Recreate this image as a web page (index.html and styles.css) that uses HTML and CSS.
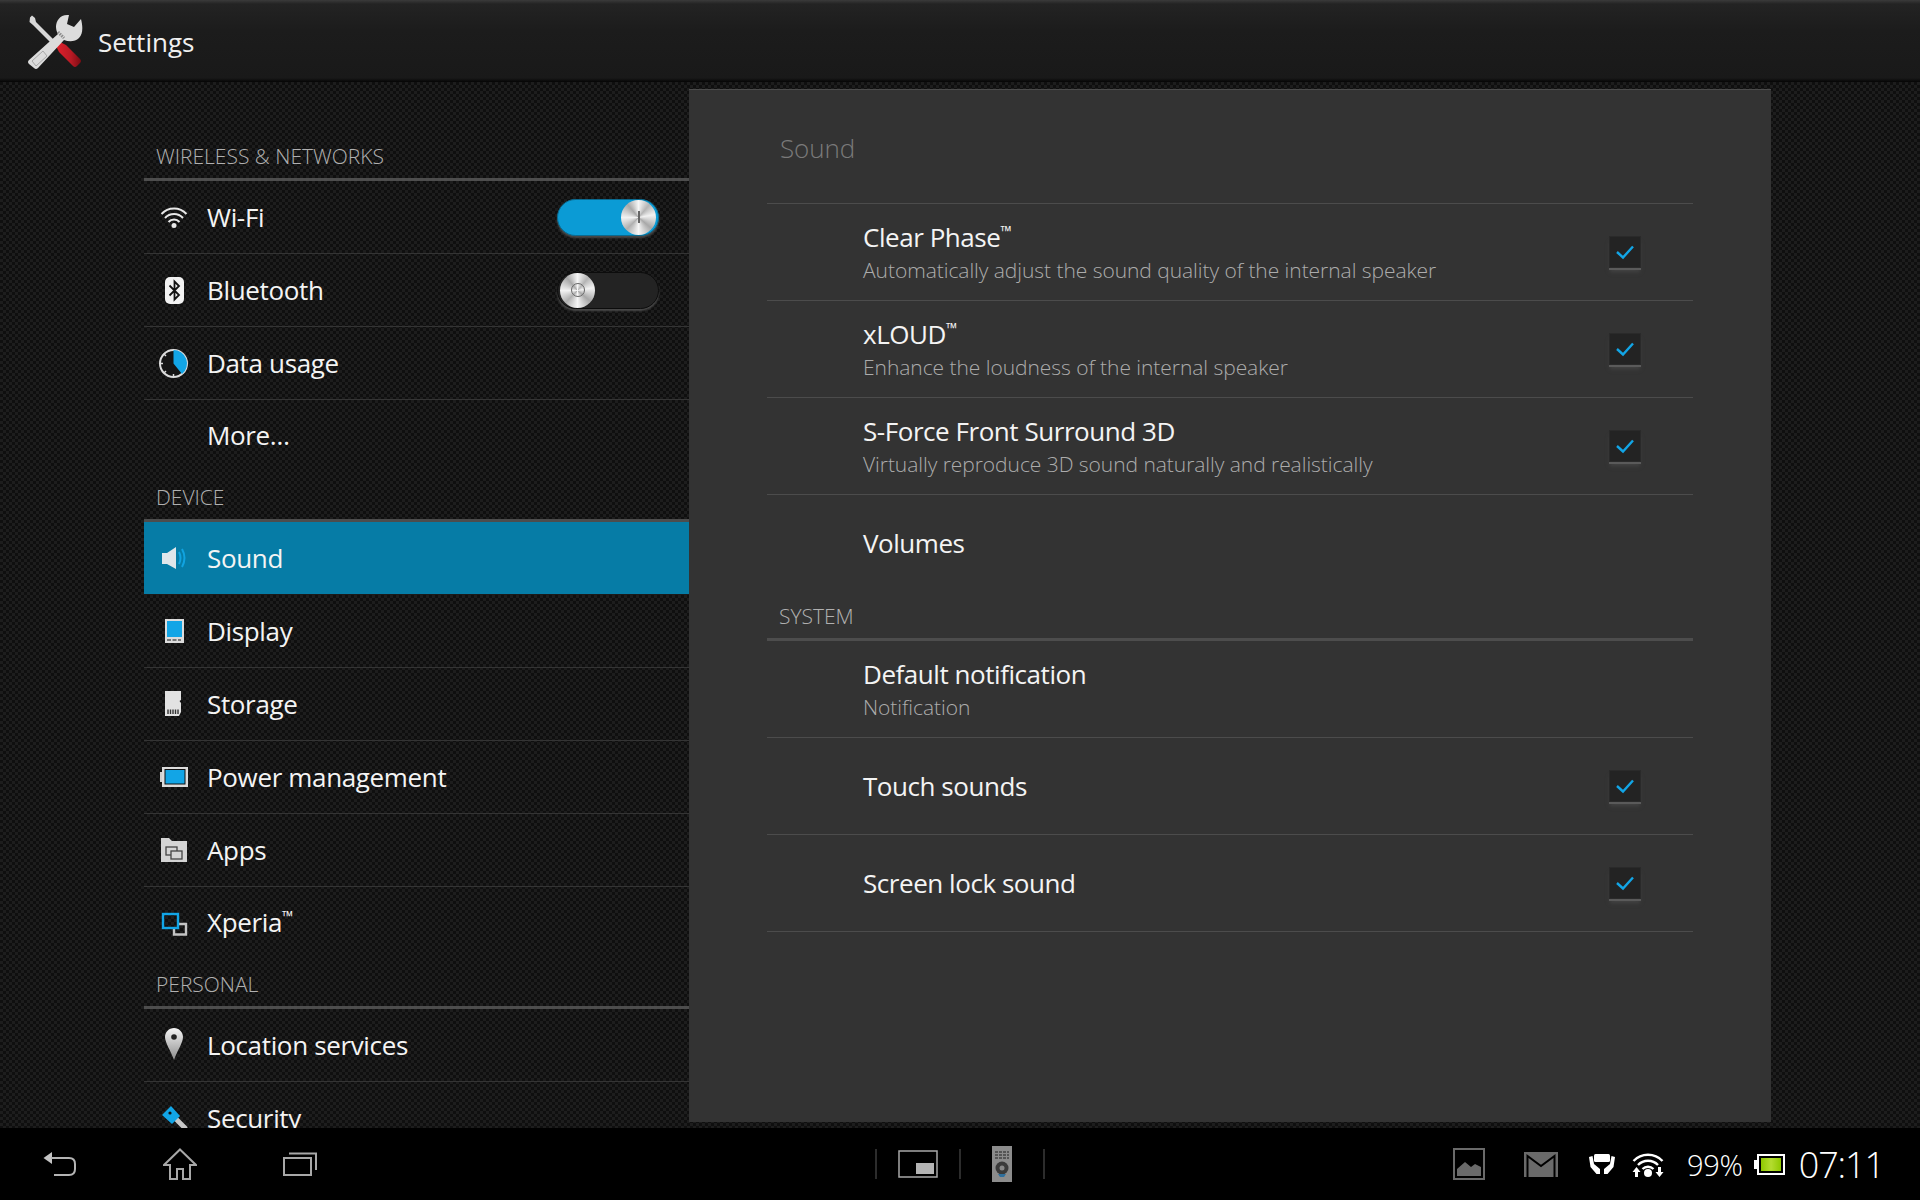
FILE: index.html
```html
<!DOCTYPE html>
<html lang="en">
<head>
    <meta charset="UTF-8">
    <meta name="viewport" content="width=device-width, initial-scale=1.0">
    <title>Settings</title>
    <link rel="stylesheet" href="styles.css">
</head>
<body>
<div class="app">

    <header class="action-bar">
        <svg class="app-icon" width="56" height="56" viewBox="0 0 56 56">
            <defs>
                <linearGradient id="redGrad" x1="0" y1="0" x2="1" y2="0">
                    <stop offset="0" stop-color="#e0202c"/>
                    <stop offset="0.6" stop-color="#b81a24"/>
                    <stop offset="1" stop-color="#7a0c14"/>
                </linearGradient>
            </defs>
            <path d="M3 4.5 L5 2.5 L8 5 L9 9 L28 28 L25 31 L6 12 L2.5 9 Z" fill="#d8d8d8"/>
            <path d="M29 33 L33 29 L39 32 L53 46 Q55 48 53 50 L50 53 Q48 55 46 53 L32 39 Z" fill="url(#redGrad)"/>
            <path d="M42 2 C33 1 29 8 29 14 C29 17 30 19 31 21 L2 47 Q0 49 2 51 L7 55 Q9 57 11 55 L37 27 C42 29 48 29 52 25 C56 21 56 14 54 6 L47 14 L40 11 Z" fill="#dcdcdc"/>
            <path d="M5 48 L16 38 L20 43 L9 53 Z" fill="none" stroke="#a8a8a8" stroke-width="1"/>
            <path d="M31 19 L37 25" stroke="#8a8a8a" stroke-width="3" stroke-dasharray="1.5 1"/>
        </svg>
        <span class="app-title">Settings</span>
    </header>

    <div class="content">
        <nav class="nav">
            <div class="section-head">WIRELESS &amp; NETWORKS</div>

            <div class="item">
                <span class="item-icon">
                    <svg width="40" height="40" viewBox="0 0 40 40" fill="none" stroke="#e8e8e8" stroke-width="2">
                        <path d="M7.5 17 A17 17 0 0 1 32.5 17"/>
                        <path d="M11 21 A12 12 0 0 1 29 21"/>
                        <path d="M14.5 25 A7.5 7.5 0 0 1 25.5 25"/>
                        <circle cx="20" cy="28.5" r="2.5" fill="#e8e8e8" stroke="none"/>
                    </svg>
                </span>
                <span class="item-label">Wi-Fi</span>
                <span class="switch switch-on"><span class="knob"><span class="knob-bar"></span></span></span>
            </div>

            <div class="item">
                <span class="item-icon">
                    <svg width="40" height="40" viewBox="0 0 40 40">
                        <rect x="11" y="7" width="19" height="27" rx="5" fill="#f2f2f2"/>
                        <path d="M15.5 15.5 L25 25 L20.5 29.5 V11.5 L25 16 L15.5 25.5" fill="none" stroke="#111" stroke-width="1.8"/>
                    </svg>
                </span>
                <span class="item-label">Bluetooth</span>
                <span class="switch"><span class="knob"><span class="knob-ring"></span></span></span>
            </div>

            <div class="item">
                <span class="item-icon">
                    <svg width="40" height="40" viewBox="0 0 40 40">
                        <circle cx="19.5" cy="20.5" r="13.5" fill="#141414" stroke="#dcdcdc" stroke-width="2"/>
                        <path d="M19.5 20.5 L19.5 7 A13.5 13.5 0 0 1 28 31 Z" fill="#12a5e6"/>
                        <path d="M19.5 34 V31 M6 20.5 H9 M10 11 L12 13 M10 30 L12 28" stroke="#dcdcdc" stroke-width="1.5"/>
                    </svg>
                </span>
                <span class="item-label">Data usage</span>
            </div>

            <div class="item item-plain">
                <span class="item-icon"></span>
                <span class="item-label">More&#8230;</span>
            </div>

            <div class="section-head">DEVICE</div>

            <div class="item item-selected">
                <span class="item-icon">
                    <svg width="40" height="40" viewBox="0 0 40 40">
                        <path d="M8 15 H13 L22 9 V31 L13 26 H8 Z" fill="#dfe6ea"/>
                        <path d="M25 14 Q28 20 25 26 M28 11 Q33 20 28 29" fill="none" stroke="#11a3e0" stroke-width="2"/>
                    </svg>
                </span>
                <span class="item-label">Sound</span>
            </div>

            <div class="item">
                <span class="item-icon">
                    <svg width="40" height="40" viewBox="0 0 40 40">
                        <rect x="11" y="8" width="19" height="24" fill="#dcdcdc"/>
                        <rect x="13" y="10" width="15" height="16" fill="#12a5e6"/>
                        <path d="M13 29 H27" stroke="#555" stroke-width="1.5" stroke-dasharray="4 1.5"/>
                    </svg>
                </span>
                <span class="item-label">Display</span>
            </div>

            <div class="item">
                <span class="item-icon">
                    <svg width="40" height="40" viewBox="0 0 40 40">
                        <path d="M11 7 H27 V16 L25.5 17 L27 19 V28 L25 32 H11 Z" fill="#e2e2e2"/>
                        <path d="M14 25.5 V30 M16.5 25.5 V30 M19 25.5 V30 M21.5 25.5 V30 M24 25.5 V30" stroke="#333" stroke-width="1.4"/>
                    </svg>
                </span>
                <span class="item-label">Storage</span>
            </div>

            <div class="item">
                <span class="item-icon">
                    <svg width="40" height="40" viewBox="0 0 40 40">
                        <rect x="6" y="15" width="3" height="10" fill="#cfcfcf"/>
                        <rect x="8" y="10" width="26" height="20" fill="#dcdcdc"/>
                        <rect x="11" y="12.5" width="20" height="14.5" fill="#12a5e6" stroke="#111" stroke-width="1"/>
                    </svg>
                </span>
                <span class="item-label">Power management</span>
            </div>

            <div class="item">
                <span class="item-icon">
                    <svg width="40" height="40" viewBox="0 0 40 40">
                        <path d="M7 8 H15 L18 11 H33 V32 H7 Z" fill="#d4d4d4"/>
                        <rect x="12" y="17" width="11" height="8" fill="none" stroke="#444" stroke-width="1.3"/>
                        <rect x="17" y="21" width="11" height="8" fill="#d4d4d4" stroke="#444" stroke-width="1.3"/>
                    </svg>
                </span>
                <span class="item-label">Apps</span>
            </div>

            <div class="item item-plain">
                <span class="item-icon">
                    <svg width="40" height="40" viewBox="0 0 40 40" fill="none" stroke-width="2.4">
                        <path d="M23 20 H32 V30.5 H20 V25" stroke="#c4c4c4"/>
                        <rect x="9" y="10" width="15" height="14" stroke="#12a5e6"/>
                    </svg>
                </span>
                <span class="item-label">Xperia<span class="tm">&#8482;</span></span>
            </div>

            <div class="section-head">PERSONAL</div>

            <div class="item">
                <span class="item-icon">
                    <svg width="40" height="40" viewBox="0 0 40 40">
                        <defs>
                            <linearGradient id="pinGrad" x1="0" y1="0" x2="0" y2="1">
                                <stop offset="0" stop-color="#f4f4f4"/>
                                <stop offset="1" stop-color="#8c8c8c"/>
                            </linearGradient>
                        </defs>
                        <path d="M20 3 C25 3 29 7 29 12 C29 18 23 26 20 35 C17 26 11 18 11 12 C11 7 15 3 20 3 Z" fill="url(#pinGrad)"/>
                        <circle cx="20" cy="12" r="2.8" fill="#222"/>
                    </svg>
                </span>
                <span class="item-label">Location services</span>
            </div>

            <div class="item">
                <span class="item-icon">
                    <svg width="40" height="40" viewBox="0 0 40 40">
                        <path d="M21 20 L32 31" stroke="#c8c8c8" stroke-width="5"/>
                        <path d="M17 8 L26 18 L18 26 L8 17 Z" fill="#12a5e6"/>
                        <circle cx="16" cy="15" r="1.6" fill="#111"/>
                    </svg>
                </span>
                <span class="item-label">Security</span>
            </div>
        </nav>

        <main class="panel">
            <div class="panel-title">Sound</div>

            <div class="row">
                <div class="row-text">
                    <div class="row-title">Clear Phase<span class="tm">&#8482;</span></div>
                    <div class="row-sub">Automatically adjust the sound quality of the internal speaker</div>
                </div>
                <span class="check"><svg width="20" height="16" viewBox="0 0 20 16"><path d="M2 8 L8 13.5 L18 2.5" fill="none" stroke="#12a5e6" stroke-width="2.4"/></svg></span>
            </div>

            <div class="row">
                <div class="row-text">
                    <div class="row-title">xLOUD<span class="tm">&#8482;</span></div>
                    <div class="row-sub">Enhance the loudness of the internal speaker</div>
                </div>
                <span class="check"><svg width="20" height="16" viewBox="0 0 20 16"><path d="M2 8 L8 13.5 L18 2.5" fill="none" stroke="#12a5e6" stroke-width="2.4"/></svg></span>
            </div>

            <div class="row">
                <div class="row-text">
                    <div class="row-title">S-Force Front Surround 3D</div>
                    <div class="row-sub">Virtually reproduce 3D sound naturally and realistically</div>
                </div>
                <span class="check"><svg width="20" height="16" viewBox="0 0 20 16"><path d="M2 8 L8 13.5 L18 2.5" fill="none" stroke="#12a5e6" stroke-width="2.4"/></svg></span>
            </div>

            <div class="row row-plain">
                <div class="row-text">
                    <div class="row-title">Volumes</div>
                </div>
            </div>

            <div class="section-head">SYSTEM</div>

            <div class="row">
                <div class="row-text">
                    <div class="row-title">Default notification</div>
                    <div class="row-sub">Notification</div>
                </div>
            </div>

            <div class="row">
                <div class="row-text">
                    <div class="row-title">Touch sounds</div>
                </div>
                <span class="check"><svg width="20" height="16" viewBox="0 0 20 16"><path d="M2 8 L8 13.5 L18 2.5" fill="none" stroke="#12a5e6" stroke-width="2.4"/></svg></span>
            </div>

            <div class="row">
                <div class="row-text">
                    <div class="row-title">Screen lock sound</div>
                </div>
                <span class="check"><svg width="20" height="16" viewBox="0 0 20 16"><path d="M2 8 L8 13.5 L18 2.5" fill="none" stroke="#12a5e6" stroke-width="2.4"/></svg></span>
            </div>
        </main>
    </div>

    <footer class="system-bar">
        <div class="soft-keys">
            <svg width="34" height="26" viewBox="0 0 34 26" fill="none">
                <path d="M0.5 7 L9 1 V13 Z" fill="#c4c4c4"/>
                <path d="M8 7 H26 Q32 7 32 13 V18 Q32 24 26 24 H11" stroke="#b4b4b4" stroke-width="2"/>
            </svg>
            <svg width="34" height="32" viewBox="0 0 34 32" fill="none" stroke="#a8a8a8" stroke-width="2">
                <path d="M17 1.5 L33 17 H27 V31 H20 V21 H14 V31 H7 V17 H1 Z"/>
            </svg>
            <svg width="34" height="24" viewBox="0 0 34 24" fill="none" stroke="#a8a8a8" stroke-width="2">
                <rect x="1" y="6" width="27" height="17"/>
                <path d="M6 1.5 H33 V18"/>
            </svg>
        </div>

        <div class="small-apps">
            <span class="divider"></span>
            <svg width="40" height="28" viewBox="0 0 40 28">
                <rect x="1" y="1" width="38" height="26" fill="none" stroke="#a8a8a8" stroke-width="1.5"/>
                <rect x="18" y="13" width="18" height="11" fill="#b4b4b4"/>
            </svg>
            <span class="divider"></span>
            <svg class="remote" width="20" height="36" viewBox="0 0 20 36">
                <rect width="20" height="36" fill="#8c8c8c"/>
                <path d="M3 6 H17 M3 9 H17 M3 12 H17" stroke="#444" stroke-width="1.5" stroke-dasharray="3 1"/>
                <circle cx="10" cy="22" r="6.5" fill="#3a3a3a"/>
                <circle cx="10" cy="22" r="2.5" fill="#888"/>
                <path d="M6 28 H14 L12 31 H8 Z" fill="#2f6f9c"/>
            </svg>
            <span class="divider"></span>
        </div>

        <div class="status">
            <svg class="st-gallery" width="32" height="32" viewBox="0 0 32 32">
                <rect x="1" y="1" width="30" height="30" fill="none" stroke="#6a6a6a" stroke-width="2"/>
                <path d="M4 28 V21 L12 14 L18 19 L22 16 L28 19 V28 Z" fill="#6a6a6a"/>
            </svg>
            <svg class="st-mail" width="34" height="25" viewBox="0 0 34 25">
                <path d="M0 0 H34 V25 H0 Z" fill="#6a6a6a"/>
                <path d="M3.5 25 V4 L17 14 L30.5 4 V25" fill="none" stroke="#000" stroke-width="2"/>
            </svg>
            <svg class="st-hands" width="26" height="22" viewBox="0 0 26 22" fill="#fff">
                <rect x="5" y="1" width="16" height="8" rx="1.5"/>
                <path d="M0 4 L3.5 3 L5 11 L11 16 V21 H7.5 L1.5 14 Z"/>
                <path d="M26 4 L22.5 3 L21 11 L15 16 V21 H18.5 L24.5 14 Z"/>
            </svg>
            <svg class="st-wifi" width="32" height="28" viewBox="0 0 32 28" fill="none" stroke="#fff" stroke-width="2.4">
                <path d="M1.5 11 A20 20 0 0 1 30.5 11"/>
                <path d="M6 15 A14 14 0 0 1 26 15"/>
                <path d="M10.5 19 A8 8 0 0 1 21.5 19"/>
                <circle cx="16" cy="23" r="4" fill="#fff" stroke="none"/>
                <path d="M0.5 22 L4.5 17 L8.5 22 H6 V27 H3 V22 Z" fill="#fff" stroke="none"/>
                <path d="M23.5 22 H26 V17 H29 V22 H31.5 L27.5 27 Z" fill="#fff" stroke="none"/>
            </svg>
            <span class="battery-text">99%</span>
            <span class="battery"><span class="battery-fill"></span></span>
            <span class="clock">07:11</span>
        </div>
    </footer>
</div>
</body>
</html>
```

FILE: styles.css
```css
body { margin: 0; background: #000; font-family: "Open Sans", "Noto Sans", sans-serif; color: #fff; }
.app { height: 1200px; display: flex; flex-direction: column; overflow: hidden; }

/* top bar */
.action-bar { height: 82px; box-sizing: border-box; flex: none; display: flex; align-items: center; padding-left: 27px; background: linear-gradient(#3a3a3a 0, #232323 4px, #1c1c1c 30px, #191919 78px, #050505 82px); }
.app-icon { margin-right: 15px; }
.app-title { font-size: 26px; color: #f0f0f0; padding-top: 2px; }

/* woven background */
.content { flex: 1; min-height: 0; display: flex; padding: 0 149px 6px 144px; overflow: hidden; background-color: #141414; background-image: repeating-conic-gradient(#1d1d1d 0 25%, #0f0f0f 0 50%); background-size: 6px 6px; }

/* left list */
.nav { width: 545px; flex: none; padding-top: 50px; }
.section-head { height: 49px; box-sizing: border-box; padding: 10px 0 0 12px; border-bottom: 3px solid #4d4d4d; font-size: 21px; font-weight: 300; color: #b0b0b0; line-height: 28px; }
.item { height: 73px; box-sizing: border-box; display: flex; align-items: center; border-bottom: 1px solid #343434; padding-right: 30px; }
.item-plain { border-bottom: none; }
.item-plain .item-label { margin-bottom: 4px; }
.item-selected { background-color: #067ca6; border-bottom-color: #1a1a1a; }
.item-icon { width: 60px; height: 40px; flex: none; display: flex; justify-content: center; }
.item-label { margin-left: 3px; flex: 1; font-size: 26px; letter-spacing: -0.35px; color: #f4f4f4; }
.tm { font-size: 15px; vertical-align: 10px; line-height: 0; }

/* on/off */
.switch { width: 102px; height: 37px; box-sizing: border-box; border-radius: 19px; display: flex; align-items: center; padding: 0 2px; background: #232323; border: 1px solid #0c0c0c; box-shadow: 0 2px 2px #4a4a4a; }
.switch-on { background: #0b9bd5; justify-content: flex-end; border-color: #0a6a90; }
.knob { width: 35px; height: 35px; border-radius: 50%; flex: none; display: flex; align-items: center; justify-content: center; background: conic-gradient(#f6f6f6, #b4b4b4 40deg, #f2f2f2 80deg, #a8a8a8 130deg, #f6f6f6 180deg, #b0b0b0 225deg, #f2f2f2 270deg, #a8a8a8 320deg, #f6f6f6); }
.knob-bar { width: 2px; height: 12px; background: #666; }
.knob-ring { width: 12px; height: 12px; border: 1.5px solid #666; border-radius: 50%; }

/* right panel */
.panel { width: 1082px; flex: none; margin-top: 7px; box-sizing: border-box; padding: 0 78px; background: #333; border-top: 1px solid #4c4c4c; }
.panel-title { height: 114px; box-sizing: border-box; padding: 39px 0 0 13px; font-size: 26px; letter-spacing: -0.1px; line-height: 38px; color: #7a7a7a; border-bottom: 1px solid #4c4c4c; font-weight: 300; }
.row { height: 97px; box-sizing: border-box; display: flex; align-items: center; padding: 0 53px 0 96px; border-bottom: 1px solid #4c4c4c; }
.row-plain { border-bottom: none; }
.row-plain .row-text { margin-bottom: 2px; }
.row-text { flex: 1; }
.row-title { font-size: 26px; letter-spacing: -0.45px; line-height: 36px; color: #f4f4f4; }
.row-sub { font-size: 21px; letter-spacing: -0.05px; line-height: 30px; color: #acacac; font-weight: 300; }
.check { width: 30px; height: 30px; flex: none; display: flex; align-items: center; justify-content: center; background: #232323; box-shadow: 0 0 0 1px #2a2a2a, 0 2px 0 1px #5a5a5a, 0 5px 4px #444; }

/* bottom bar */
.system-bar { height: 72px; flex: none; display: grid; grid-template-columns: 1fr auto 1fr; align-items: center; background: #000; }
.soft-keys { display: flex; align-items: center; gap: 86px; padding-left: 43px; }
.small-apps { display: flex; align-items: center; gap: 21px; }
.remote { margin: 0 10px; }
.divider { width: 2px; height: 30px; background: #2c2c2c; }
.status { display: flex; align-items: center; justify-content: flex-end; padding-right: 36px; }
.st-gallery { margin-right: 39px; }
.st-mail { margin-right: 31px; }
.st-hands { margin-right: 17px; }
.st-wifi { margin-right: 23px; }
.battery-text { font-size: 29px; letter-spacing: -0.3px; font-weight: 300; margin-right: 14px; }
.battery { position: relative; width: 28px; height: 21px; box-sizing: border-box; border: 2px solid #fff; margin-right: 14px; padding: 2px; }
.battery::before { content: ""; position: absolute; left: -5px; top: 4px; width: 3px; height: 9px; background: #fff; }
.battery-fill { display: block; width: 100%; height: 100%; background: linear-gradient(90deg, #8fc800, #b4dc30, #8fc800); }
.clock { font-size: 36px; letter-spacing: -1.1px; font-weight: 300; }
```
